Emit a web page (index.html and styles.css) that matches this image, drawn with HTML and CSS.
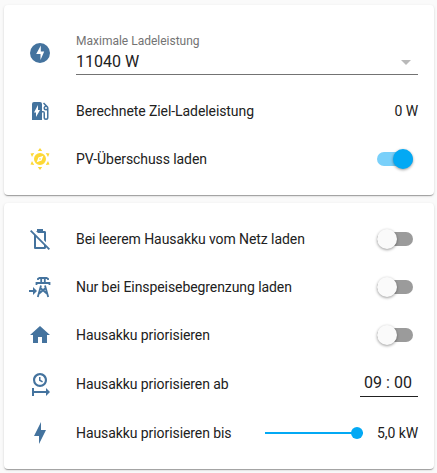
FILE: index.html
```html
<!DOCTYPE html>
<html lang="de">
<head>
<meta charset="utf-8">
<title>Ladeleistung</title>
<link rel="stylesheet" href="styles.css">
</head>
<body>
<main class="view">
  <section class="card">
    <div class="row row-select">
      <svg class="icon" viewBox="0 0 24 24"><path fill-rule="evenodd" d="M12 2A10 10 0 1 0 12 22A10 10 0 1 0 12 2ZM12.5 19V13H8.2L12.8 4.5V10.5H16.2Z"/></svg>
      <div class="select">
        <label class="select-label">Maximale Ladeleistung</label>
        <div class="select-value">11040 W<span class="caret"></span></div>
      </div>
    </div>
    <div class="row">
      <svg class="icon" viewBox="0 0 24 24"><path d="M19.77,7.23L19.78,7.22L16.06,3.5L15,4.56L17.11,6.67C16.17,7.03 15.5,7.93 15.5,9A2.5,2.5 0 0,0 18,11.5C18.36,11.5 18.69,11.42 19,11.29V18.5A1,1 0 0,1 18,19.5A1,1 0 0,1 17,18.5V14A2,2 0 0,0 15,12H14V5A2,2 0 0,0 12,3H6A2,2 0 0,0 4,5V21H14V13.5H15.5V18.5A2.5,2.5 0 0,0 18,21A2.5,2.5 0 0,0 20.5,18.5V9C20.5,8.31 20.22,7.68 19.77,7.23M18,10A1,1 0 0,1 17,9A1,1 0 0,1 18,8A1,1 0 0,1 19,9A1,1 0 0,1 18,10M8,18V13.5H6L10,6V11H12L8,18Z"/></svg>
      <span class="name">Berechnete Ziel-Ladeleistung</span>
      <span class="value">0 W</span>
    </div>
    <div class="row">
      <svg class="icon sun" viewBox="0 0 24 24"><path fill-rule="evenodd" d="M12 6A6 6 0 1 0 12 18A6 6 0 1 0 12 6ZM8.7 15.3L10.4 10.4L15.3 8.7L13.6 13.6ZM12 11.2A.8 .8 0 1 0 12 12.8A.8 .8 0 1 0 12 11.2ZM12 1L14.2 4H9.8ZM12 23L9.8 20H14.2ZM2.5 6.5L6.2 6.1L4 9.9ZM21.5 6.5L20 9.9L17.8 6.1ZM2.5 17.5L4 14.1L6.2 17.9ZM21.5 17.5L17.8 17.9L20 14.1Z"/></svg>
      <span class="name">PV-Überschuss laden</span>
      <span class="switch on"></span>
    </div>
  </section>
  <section class="card">
    <div class="row">
      <svg class="icon" viewBox="0 0 24 24"><path d="M3.3 3L2 4.3L6 8.3V20.7C6 21.4 6.6 22 7.3 22H16.7C17.3 22 17.8 21.6 18 21L18 20.3L20.7 23L22 21.7ZM8 20V10.3L16 18.3V20ZM16 6V13.3L18 15.3V5.3C18 4.6 17.4 4 16.7 4H15V2H9V4H8L10 6Z"/></svg>
      <span class="name">Bei leerem Hausakku vom Netz laden</span>
      <span class="switch"></span>
    </div>
    <div class="row">
      <svg class="icon" viewBox="0 0 24 24"><path d="M1 15H5V12L9 16L5 20V17H1Z"/><g class="tower"><path d="M10 5V3.8L11.5 3H18.5L20 3.8V5M13.2 3V8M16.8 3V8M8.5 10V8H21.5V10"/><path d="M13 10.5L9.8 22M17 10.5L20.2 22M12.4 13L18.8 18.5M17.6 13L11.2 18.5"/></g></svg>
      <span class="name">Nur bei Einspeisebegrenzung laden</span>
      <span class="switch"></span>
    </div>
    <div class="row">
      <svg class="icon" viewBox="0 0 24 24"><path d="M10,20V14H14V20H19V12H22L12,3L2,12H5V20H10Z"/></svg>
      <span class="name">Hausakku priorisieren</span>
      <span class="switch"></span>
    </div>
    <div class="row row-time">
      <svg class="icon" viewBox="0 0 24 24"><path d="M12 1C8.14 1 5 4.14 5 8A7 7 0 0 0 12 15C15.86 15 19 11.87 19 8C19 4.14 15.86 1 12 1M12 3.15C14.67 3.15 16.85 5.32 16.85 8S14.67 12.85 12 12.85 7.15 10.68 7.15 8 9.32 3.15 12 3.15M11 5V8.69L14.19 10.53L14.94 9.23L12.5 7.82V5M4 16V24H6V21H18V24L22 20L18 16V19H6V16"/></svg>
      <span class="name">Hausakku priorisieren ab</span>
      <div class="time"><span>09</span><span>:</span><span>00</span></div>
    </div>
    <div class="row">
      <svg class="icon" viewBox="0 0 24 24"><path d="M11,15H6L13,1V9H18L11,23V15Z"/></svg>
      <span class="name">Hausakku priorisieren bis</span>
      <div class="slider"><span class="knob"></span></div>
      <span class="value">5,0 kW</span>
    </div>
  </section>
</main>
</body>
</html>
```
FILE: styles.css
```css
* { box-sizing: border-box; }
body {
  margin: 0;
  background: #fafafa;
  color: #212121;
  font: 14px/20px Roboto, "Liberation Sans", sans-serif;
}
.view {
  display: flex;
  flex-direction: column;
  gap: 8px;
  padding: 5px 3px 4px 4px;
}
.card {
  display: flex;
  flex-direction: column;
  gap: 8px;
  padding: 16px;
  background: #fff;
  border-radius: 4px;
  box-shadow: 0 2px 1px -1px rgba(0,0,0,.2), 0 1px 1px rgba(0,0,0,.14), 0 1px 3px rgba(0,0,0,.12);
}
.row { display: flex; align-items: center; height: 40px; }
.row-select { height: 62px; padding-top: 2px; }
.row-time { height: 42px; }
.icon { flex: none; width: 24px; height: 24px; margin: 0 24px 0 8px; fill: #44739e; }
.sun { fill: #fdd835; }
.tower { fill: none; stroke: #44739e; stroke-width: 1.8; }
.name { flex: 1; white-space: nowrap; letter-spacing: -.08px; }
.value { white-space: nowrap; letter-spacing: -.08px; }
.select { flex: 1; height: 44px; border-bottom: 1px solid #737373; }
.select-label { display: block; font-size: 12px; line-height: 20px; color: #737373; }
.select-value {
  display: flex;
  align-items: center;
  justify-content: space-between;
  padding-right: 7px;
  font-size: 16px;
  line-height: 22px;
}
.caret { border: 5px solid transparent; border-top-color: #b9b9b9; border-bottom: 0; }
.switch {
  display: flex;
  align-items: center;
  width: 36px;
  height: 14px;
  margin-right: 5px;
  border-radius: 7px;
  background: #9b9b9b;
}
.switch::before {
  content: "";
  width: 20px;
  height: 20px;
  border-radius: 50%;
  background: #fafafa;
  box-shadow: 0 1px 3px rgba(0,0,0,.4);
}
.switch.on { justify-content: flex-end; background: #79d0fa; }
.switch.on::before { background: #03a9f4; }
.time {
  display: flex;
  justify-content: center;
  gap: 4px;
  width: 58px;
  height: 26px;
  padding-right: 2px;
  border-bottom: 1px solid #212121;
  font-size: 16px;
  line-height: 24px;
}
.slider {
  display: flex;
  align-items: center;
  justify-content: flex-end;
  width: 98px;
  height: 2px;
  margin-right: 14px;
  background: #03a9f4;
}
.knob { flex: none; width: 12px; height: 12px; border-radius: 50%; background: #03a9f4; }
```
